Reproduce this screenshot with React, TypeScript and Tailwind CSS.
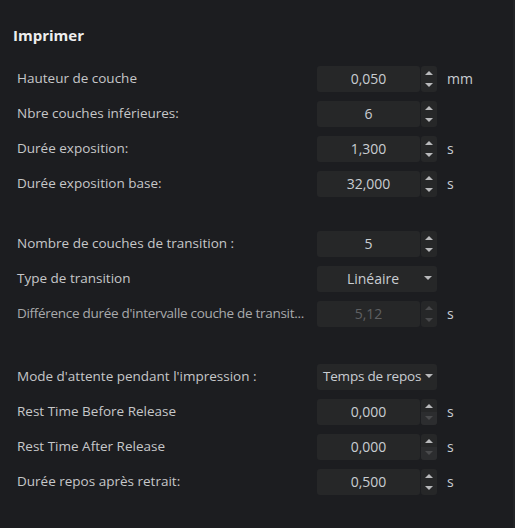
import React from "react";

type Row =
  | { kind: "spin"; label: string; value: string; unit?: string; disabled?: boolean; downDisabled?: boolean }
  | { kind: "select"; label: string; value: string; wide?: boolean };

const groups: Row[][] = [
  [
    { kind: "spin", label: "Hauteur de couche", value: "0,050", unit: "mm" },
    { kind: "spin", label: "Nbre couches inférieures:", value: "6" },
    { kind: "spin", label: "Durée exposition:", value: "1,300", unit: "s" },
    { kind: "spin", label: "Durée exposition base:", value: "32,000", unit: "s" },
  ],
  [
    { kind: "spin", label: "Nombre de couches de transition :", value: "5" },
    { kind: "select", label: "Type de transition", value: "Linéaire" },
    {
      kind: "spin",
      label: "Différence durée d'intervalle couche de transit...",
      value: "5,12",
      unit: "s",
      disabled: true,
    },
  ],
  [
    { kind: "select", label: "Mode d'attente pendant l'impression :", value: "Temps de repos", wide: true },
    { kind: "spin", label: "Rest Time Before Release", value: "0,000", unit: "s", downDisabled: true },
    { kind: "spin", label: "Rest Time After Release", value: "0,000", unit: "s", downDisabled: true },
    { kind: "spin", label: "Durée repos après retrait:", value: "0,500", unit: "s" },
  ],
];

function Caret({ up, dim }: { up?: boolean; dim?: boolean }) {
  return (
    <svg width="8" height="5" viewBox="0 0 8 5" className={dim ? "text-[#4a4b4d]" : "text-[#b8b9bb]"}>
      <path d={up ? "M0 5 L4 1 L8 5 Z" : "M0 0 L8 0 L4 4 Z"} fill="currentColor" />
    </svg>
  );
}

function Spin({ row }: { row: Extract<Row, { kind: "spin" }> }) {
  const dis = row.disabled;
  return (
    <div className="flex items-center">
      <div
        className={`w-[103px] h-[26px] rounded-[3px] bg-[#262728] flex items-center justify-center text-[14px] ${
          dis ? "text-[#5f6062]" : "text-[#c9cdd2]"
        }`}
      >
        {row.value}
      </div>
      <div className="ml-[1px] w-[16px] h-[26px] rounded-[3px] bg-[#262728] flex flex-col">
        <div className="flex-1 flex items-center justify-center">
          <Caret up dim={dis} />
        </div>
        <div className={`flex-1 flex items-center justify-center rounded-b-[3px] ${row.downDisabled ? "bg-[#2c2d2f]" : ""}`}>
          <Caret dim={dis || row.downDisabled} />
        </div>
      </div>
      <span className="ml-[10px] text-[14px] text-[#c9cdd2]">{row.unit}</span>
    </div>
  );
}

function Select({ row }: { row: Extract<Row, { kind: "select" }> }) {
  return (
    <div className="w-[120px] h-[26px] rounded-[3px] bg-[#262728] flex items-center text-[14px] text-[#c9cdd2] whitespace-nowrap">
      {row.wide ? (
        <div className="flex items-center pl-[6px] gap-[4px] text-[13.5px] tracking-[-0.2px]">
          <span>{row.value}</span>
          <Caret />
        </div>
      ) : (
        <>
          <span className="flex-1 text-center pl-[5px]">{row.value}</span>
          <span className="pr-[5px] flex">
            <Caret />
          </span>
        </>
      )}
    </div>
  );
}

export default function App() {
  return (
    <div
      className="w-[515px] h-[528px] bg-[#1c1d20] border-r-2 border-[#222326] overflow-hidden"
      style={{ fontFamily: '"Open Sans", "Noto Sans", sans-serif' }}
    >
      <div className="pt-[24px] pl-[13px] text-[15px] font-bold text-[#eeeeee] leading-[22px]">Imprimer</div>
      <div className="mt-[15px] flex flex-col">
        {groups.map((g, gi) => (
          <div key={gi} className={gi === 0 ? "" : gi === 1 ? "mt-[25px]" : "mt-[28px]"}>
            {g.map((row) => {
              const dis = row.kind === "spin" && row.disabled;
              return (
                <div key={row.label} className="h-[35px] flex items-center">
                  <div
                    className={`w-[317px] shrink-0 pl-[17px] whitespace-nowrap text-[13.5px] ${
                      dis ? "text-[#a9aaac] tracking-[-0.3px]" : "text-[#c6c7c9]"
                    }`}
                  >
                    {row.label}
                  </div>
                  {row.kind === "spin" ? <Spin row={row} /> : <Select row={row} />}
                </div>
              );
            })}
          </div>
        ))}
      </div>
    </div>
  );
}
